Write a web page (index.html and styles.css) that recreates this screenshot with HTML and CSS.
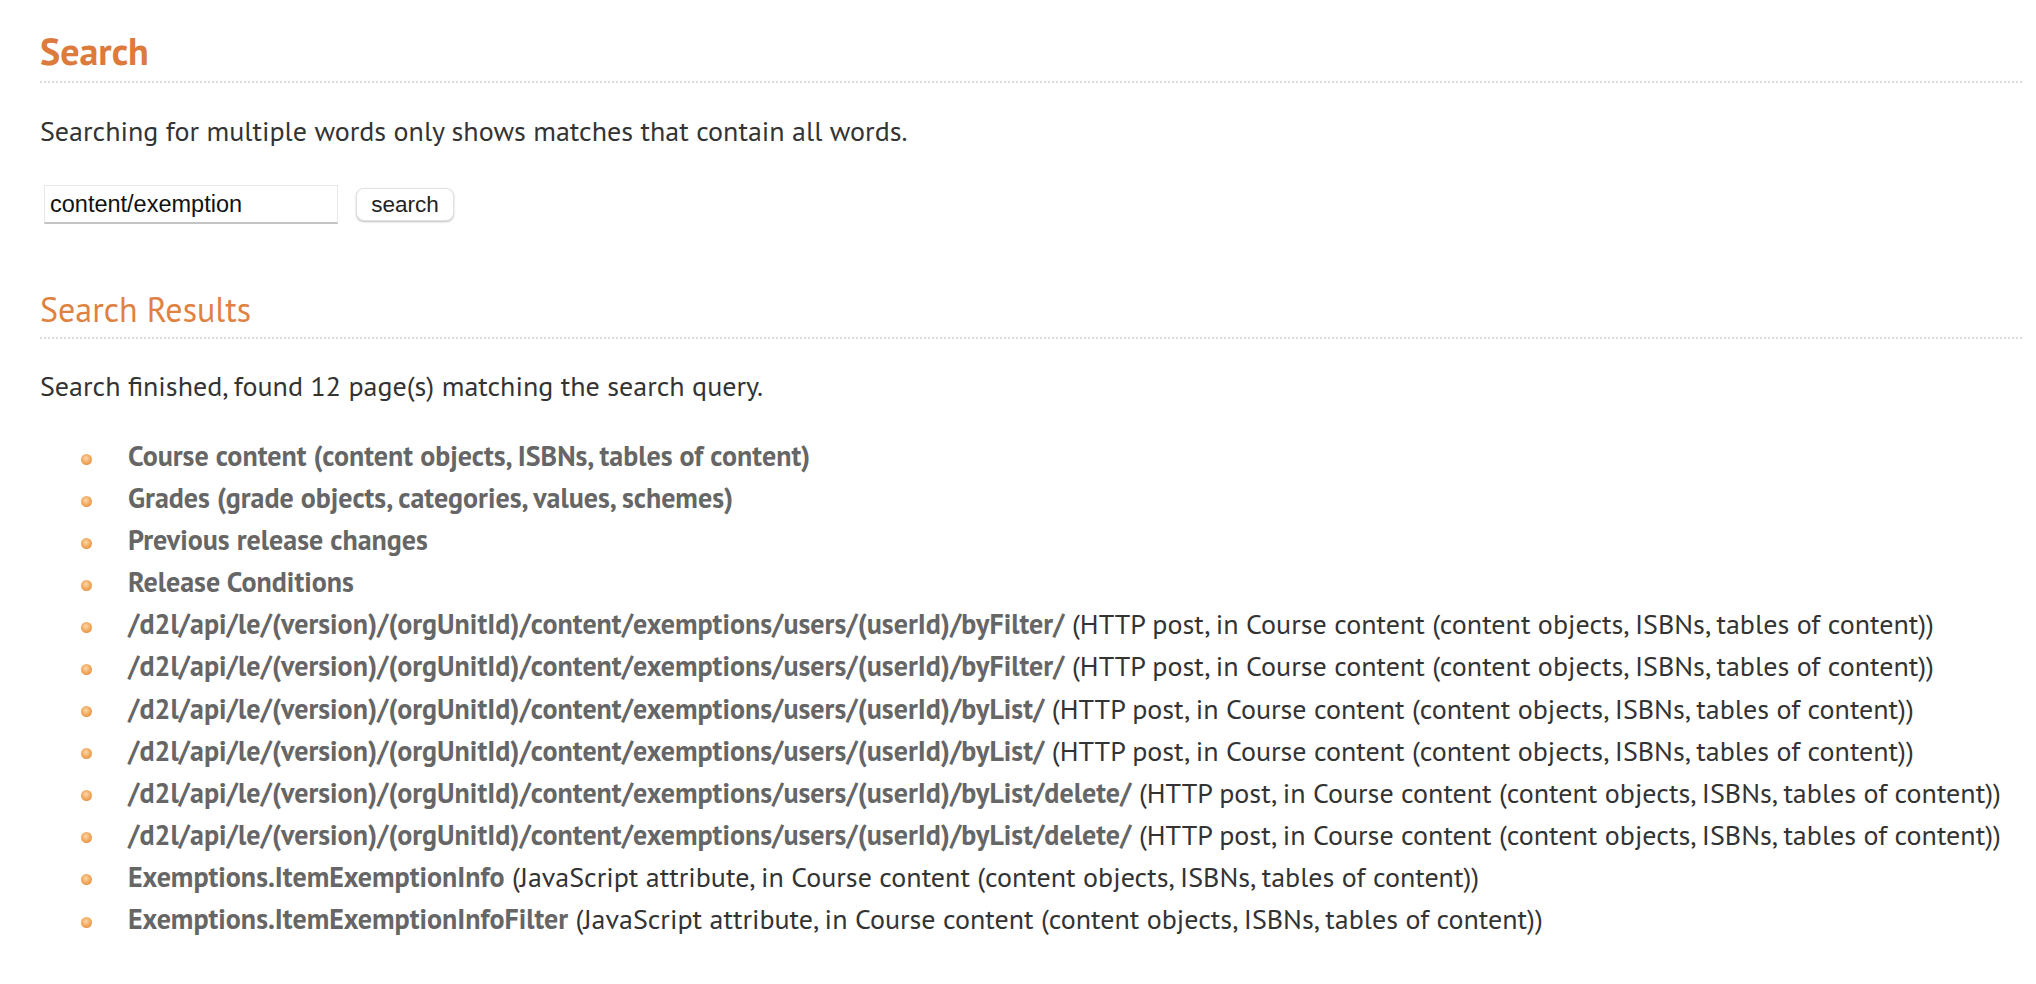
FILE: index.html
```html
<!DOCTYPE html>
<html lang="en">
<head>
<meta charset="utf-8">
<title>Search</title>
<link rel="stylesheet" href="styles.css">
</head>
<body>
<main class="page">
  <h1 class="title">Search</h1>
  <p class="hint">Searching for multiple words only shows matches that contain all words.</p>
  <form class="search-form">
    <input class="search-input" type="text" value="content/exemption">
    <button class="search-button" type="button">search</button>
  </form>
  <h2 class="subtitle">Search Results</h2>
  <p class="status">Search finished, found 12 page(s) matching the search query.</p>
  <ul class="results">
    <li class="result"><a class="result-link" href="#">Course content (content objects, ISBNs, tables of content)</a></li>
    <li class="result"><a class="result-link" href="#">Grades (grade objects, categories, values, schemes)</a></li>
    <li class="result"><a class="result-link" href="#">Previous release changes</a></li>
    <li class="result"><a class="result-link" href="#">Release Conditions</a></li>
    <li class="result"><a class="result-link" href="#">/d2l/api/le/(version)/(orgUnitId)/content/exemptions/users/(userId)/byFilter/</a> (HTTP post, in Course content (content objects, ISBNs, tables of content))</li>
    <li class="result"><a class="result-link" href="#">/d2l/api/le/(version)/(orgUnitId)/content/exemptions/users/(userId)/byFilter/</a> (HTTP post, in Course content (content objects, ISBNs, tables of content))</li>
    <li class="result"><a class="result-link" href="#">/d2l/api/le/(version)/(orgUnitId)/content/exemptions/users/(userId)/byList/</a> (HTTP post, in Course content (content objects, ISBNs, tables of content))</li>
    <li class="result"><a class="result-link" href="#">/d2l/api/le/(version)/(orgUnitId)/content/exemptions/users/(userId)/byList/</a> (HTTP post, in Course content (content objects, ISBNs, tables of content))</li>
    <li class="result"><a class="result-link" href="#">/d2l/api/le/(version)/(orgUnitId)/content/exemptions/users/(userId)/byList/delete/</a> (HTTP post, in Course content (content objects, ISBNs, tables of content))</li>
    <li class="result"><a class="result-link" href="#">/d2l/api/le/(version)/(orgUnitId)/content/exemptions/users/(userId)/byList/delete/</a> (HTTP post, in Course content (content objects, ISBNs, tables of content))</li>
    <li class="result"><a class="result-link" href="#">Exemptions.ItemExemptionInfo</a> (JavaScript attribute, in Course content (content objects, ISBNs, tables of content))</li>
    <li class="result"><a class="result-link" href="#">Exemptions.ItemExemptionInfoFilter</a> (JavaScript attribute, in Course content (content objects, ISBNs, tables of content))</li>
  </ul>
</main>
</body>
</html>
```

FILE: styles.css
```css
html, body {
  margin: 0;
  background: #fff;
}

.page {
  padding: 28px 14px 40px 40px;
  font-family: "PT Sans", "Open Sans", "Liberation Sans", sans-serif;
  font-size: 28px;
  color: #333;
}

.title {
  margin: 0;
  font-family: "PT Sans", Lato, "Liberation Sans", sans-serif;
  font-size: 38px;
  font-weight: 700;
  line-height: 46px;
  color: #dd7b3c;
  padding-bottom: 7px;
  border-bottom: 2px dotted #ddd;
}

.hint {
  margin: 33px 0 0;
  line-height: 30px;
}

.search-form {
  display: flex;
  align-items: center;
  gap: 18px;
  margin-top: 39px;
  padding-left: 4px;
}

.search-input {
  box-sizing: border-box;
  width: 294px;
  height: 39px;
  margin: 0;
  padding: 0 5px;
  border: 1px solid #e8e8e8;
  border-bottom: 2px solid #c4c4c4;
  font-family: "Liberation Sans", Arial, sans-serif;
  font-size: 23.5px;
  color: #111;
  outline: none;
}

.search-button {
  box-sizing: border-box;
  width: 98px;
  height: 33px;
  margin: 0;
  padding: 0;
  border: 1px solid #e2e2e2;
  border-radius: 8px;
  background: #fff;
  box-shadow: 0 1px 2px rgba(0, 0, 0, 0.25);
  font-family: "Liberation Sans", Arial, sans-serif;
  font-size: 22.5px;
  color: #222;
}

.subtitle {
  margin: 65px 0 0;
  font-family: "PT Sans", Lato, "Liberation Sans", sans-serif;
  font-size: 34px;
  font-weight: 400;
  line-height: 40px;
  color: #e0823f;
  padding-bottom: 8px;
  border-bottom: 2px dotted #ddd;
}

.status {
  margin: 32px 0 0;
  line-height: 30px;
}

.results {
  list-style: none;
  margin: 34px 0 0;
  padding: 0 0 0 41px;
}

.result {
  line-height: 42.1px;
  white-space: nowrap;
}

.result::before {
  content: "";
  display: inline-block;
  width: 11px;
  height: 11px;
  border-radius: 50%;
  margin-right: 36px;
  vertical-align: middle;
  background: radial-gradient(circle at 45% 40%, #fbd7a8 0%, #f2a85c 50%, #d97f2e 100%);
}

.result-link {
  font-weight: 700;
  color: #666;
  text-decoration: none;
}
```
